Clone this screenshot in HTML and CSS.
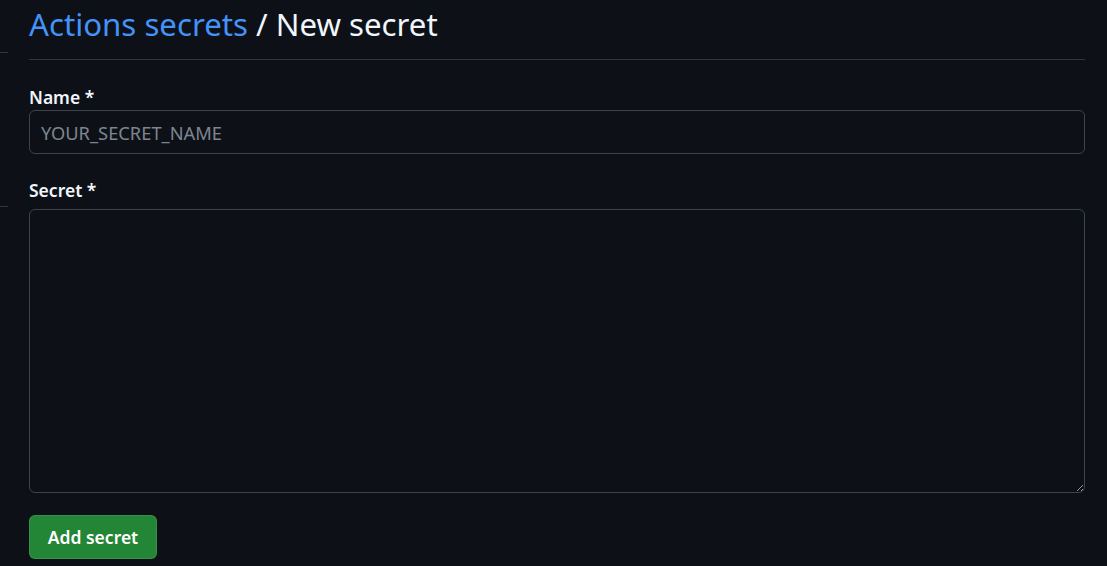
FILE: index.html
```html
<!DOCTYPE html>
<html lang="en">
<head>
<meta charset="utf-8">
<title>New secret</title>
<link rel="stylesheet" href="styles.css">
</head>
<body>
<div class="page">
  <aside class="sidebar">
    <div class="side-line side-line-1"></div>
    <div class="side-line side-line-2"></div>
  </aside>
  <main class="main">
    <div class="subhead">
      <h2 class="subhead-heading"><a class="crumb" href="#">Actions secrets</a> / New secret</h2>
    </div>
    <form class="form">
      <div class="form-group name-group">
        <label class="form-label" for="name">Name <span class="req">*</span></label>
        <input class="form-control name-input" id="name" type="text" placeholder="YOUR_SECRET_NAME">
      </div>
      <div class="form-group secret-group">
        <label class="form-label" for="secret">Secret <span class="req">*</span></label>
        <textarea class="form-control secret-input" id="secret"></textarea>
      </div>
      <button class="btn-primary" type="button">Add secret</button>
    </form>
  </main>
</div>
</body>
</html>
```

FILE: styles.css
```css
html, body {
  margin: 0;
  padding: 0;
  background: #0d1117;
  color: #f0f6fc;
  font-family: "Noto Sans", "Open Sans", sans-serif;
  color-scheme: dark;
  overflow: hidden;
}

.page {
  display: flex;
  height: 566px;
}

.sidebar {
  width: 8px;
  flex: 0 0 8px;
  display: flex;
  flex-direction: column;
}

.side-line {
  height: 1px;
  background: #30363d;
}

.side-line-1 {
  margin-top: 52px;
}

.side-line-2 {
  margin-top: 153px;
}

.main {
  margin-left: 21px;
  width: 1056px;
}

.subhead {
  height: 59px;
  border-bottom: 1px solid #30363d;
  box-sizing: content-box;
}

.subhead-heading {
  margin: 0;
  padding-top: 4px;
  font-size: 31.2px;
  line-height: 40px;
  font-weight: 400;
  color: #f0f6fc;
}

.crumb {
  color: #4493f8;
  text-decoration: none;
}

.form {
  display: flex;
  flex-direction: column;
  align-items: flex-start;
}

.form-group {
  display: flex;
  flex-direction: column;
  width: 100%;
}

.name-group {
  margin-top: 25px;
}

.secret-group {
  margin-top: 24px;
}

.form-label {
  font-size: 17.5px;
  line-height: 24px;
  font-weight: 600;
  color: #f0f6fc;
}

.req {
  font-weight: 600;
}

.form-control {
  box-sizing: border-box;
  width: 100%;
  background: #0d1117;
  border: 1px solid #3d444d;
  border-radius: 6px;
  color: #f0f6fc;
  font-family: "Noto Sans", "Open Sans", sans-serif;
  font-size: 18.3px;
  outline: none;
}

.form-control::placeholder {
  color: #7d8590;
}

.name-input {
  margin-top: 1px;
  height: 44px;
  padding: 0 11px;
}

.secret-input {
  margin-top: 7px;
  height: 284px;
  padding: 8px 11px;
  resize: vertical;
}

.btn-primary {
  margin-top: 22px;
  height: 44px;
  width: 128px;
  box-sizing: border-box;
  background: #238636;
  border: 1px solid rgba(240, 246, 252, 0.1);
  border-radius: 6px;
  color: #ffffff;
  font-family: "Noto Sans", "Open Sans", sans-serif;
  font-size: 17.5px;
  font-weight: 600;
  padding: 0;
  cursor: pointer;
}
```
